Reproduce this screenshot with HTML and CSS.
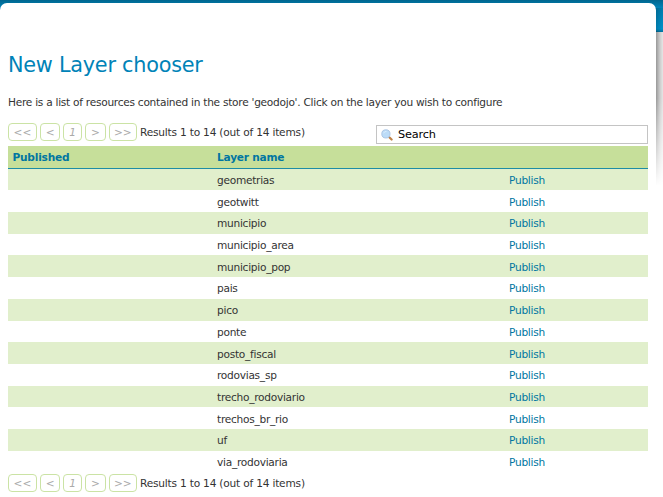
FILE: index.html
```html
<!DOCTYPE html>
<html lang="en">
<head>
<meta charset="utf-8">
<title>New Layer chooser</title>
<link rel="stylesheet" href="styles.css">
</head>
<body>
<div class="banner"></div>
<div class="card-shadow"></div>
<main class="card">
  <h1>New Layer chooser</h1>
  <p class="intro">Here is a list of resources contained in the store 'geodojo'. Click on the layer you wish to configure</p>
  <div class="toolbar">
    <div class="pager"><span class="b1">&lt;&lt;</span><span class="b2">&lt;</span><span class="b3"><em>1</em></span><span class="b4">&gt;</span><span class="b5">&gt;&gt;</span><div class="results">Results 1 to 14 (out of 14 items)</div></div>
    <div class="search">
      <svg width="12" height="12" viewBox="0 0 12 12"><path d="M8 8l2.6 2.5" stroke="#c08348" stroke-width="2.2" stroke-linecap="round"/><circle cx="4.9" cy="4.9" r="4.1" fill="#bcdcf8" stroke="#adc6e4" stroke-width="1"/><path d="M2.5 4.3Q3.4 2.3 5.5 2.4" stroke="#dceefe" fill="none"/></svg>
      <span>Search</span>
    </div>
  </div>
  <table>
    <thead><tr><th class="c1">Published</th><th class="c2">Layer name</th><th class="c3"></th></tr></thead>
    <tbody>
      <tr><td></td><td>geometrias</td><td><a>Publish</a></td></tr>
      <tr><td></td><td>geotwitt</td><td><a>Publish</a></td></tr>
      <tr><td></td><td>municipio</td><td><a>Publish</a></td></tr>
      <tr><td></td><td>municipio_area</td><td><a>Publish</a></td></tr>
      <tr><td></td><td>municipio_pop</td><td><a>Publish</a></td></tr>
      <tr><td></td><td>pais</td><td><a>Publish</a></td></tr>
      <tr><td></td><td>pico</td><td><a>Publish</a></td></tr>
      <tr><td></td><td>ponte</td><td><a>Publish</a></td></tr>
      <tr><td></td><td>posto_fiscal</td><td><a>Publish</a></td></tr>
      <tr><td></td><td>rodovias_sp</td><td><a>Publish</a></td></tr>
      <tr><td></td><td>trecho_rodoviario</td><td><a>Publish</a></td></tr>
      <tr><td></td><td>trechos_br_rio</td><td><a>Publish</a></td></tr>
      <tr><td></td><td>uf</td><td><a>Publish</a></td></tr>
      <tr><td></td><td>via_rodoviaria</td><td><a>Publish</a></td></tr>
    </tbody>
  </table>
  <div class="pager bottom"><span class="b1">&lt;&lt;</span><span class="b2">&lt;</span><span class="b3"><em>1</em></span><span class="b4">&gt;</span><span class="b5">&gt;&gt;</span><div class="results">Results 1 to 14 (out of 14 items)</div></div>
</main>
</body>
</html>
```
FILE: styles.css
```css
* { box-sizing: border-box; }
body {
  margin: 0;
  height: 497px;
  overflow: hidden;
  position: relative;
  background: #fff;
  color: #333;
  font: 10.6px/14px "DejaVu Sans", sans-serif;
  letter-spacing: -.27px;
}
.banner {
  position: absolute;
  inset: 0 0 auto 0;
  height: 32px;
  background: linear-gradient(#00668f, #0084b8 8px, #009ad6 29px, #0082b5 31px);
}
.card-shadow {
  position: absolute;
  left: 652px;
  top: 8px;
  width: 11px;
  height: 178px;
  background: linear-gradient(90deg, rgba(0,0,0,.4) 4px, rgba(0,0,0,.2) 8px, rgba(0,0,0,.1));
  -webkit-mask-image: linear-gradient(rgba(0,0,0,.5), rgba(0,0,0,.5) 23px, #000 24px, #000 90px, transparent);
  mask-image: linear-gradient(rgba(0,0,0,.5), rgba(0,0,0,.5) 23px, #000 24px, #000 90px, transparent);
}
.card {
  position: relative;
  width: 656px;
  height: 494px;
  margin-top: 3px;
  padding: 47px 8px 0;
  background: #fff;
  border-radius: 7px 7px 0 0;
}
body::before { content: ""; display: table; }
h1 {
  margin: 0;
  height: 30px;
  font-size: 20.8px;
  line-height: 31px;
  font-weight: normal;
  letter-spacing: -.25px;
  color: #0083b8;
}
.intro { margin: 15px 0 0; white-space: nowrap; }
.toolbar {
  display: flex;
  justify-content: space-between;
  height: 23px;
  margin-top: 14px;
}
.pager { display: flex; height: 18px; gap: 3.1px; color: #aaa; }
.pager span {
  flex: none;
  height: 18px;
  border: 1px solid #cbe3a5;
  border-radius: 4px;
  line-height: 17px;
  text-align: center;
  letter-spacing: 0;
}
.pager .b1 { width: 29px; }
.pager .b2 { width: 20px; }
.pager .b3 { width: 19px; }
.pager .b4 { width: 20.5px; }
.pager .b5 { width: 28px; }
.results { color: #333; line-height: 19px; white-space: nowrap; letter-spacing: -.2px; }
.search {
  display: flex;
  align-items: center;
  gap: 5px;
  width: 272px;
  height: 19px;
  margin-top: 2px;
  padding-left: 4px;
  border: 1px solid #c4c4c4;
  color: #000;
  font-size: 11.3px;
  letter-spacing: -.2px;
}
.search span { line-height: 16px; }
table { width: 640px; table-layout: fixed; border-collapse: separate; border-spacing: 0; }
th, td { padding: 1px 5px 0; text-align: left; white-space: nowrap; }
th {
  height: 22.7px;
  background: #c6df9a;
  border-bottom: 1px solid #1d8ca5;
  color: #0076a1;
  letter-spacing: -.22px;
}
th.c1 { padding-left: 4.5px; }
td { height: 21.7px; }
tbody tr:nth-child(odd) { background: #e1efcc; }
.c1 { width: 204px; }
.c2 { width: 292px; }
a { color: #0076a1; }
.bottom { margin-top: 1.6px; }
```
